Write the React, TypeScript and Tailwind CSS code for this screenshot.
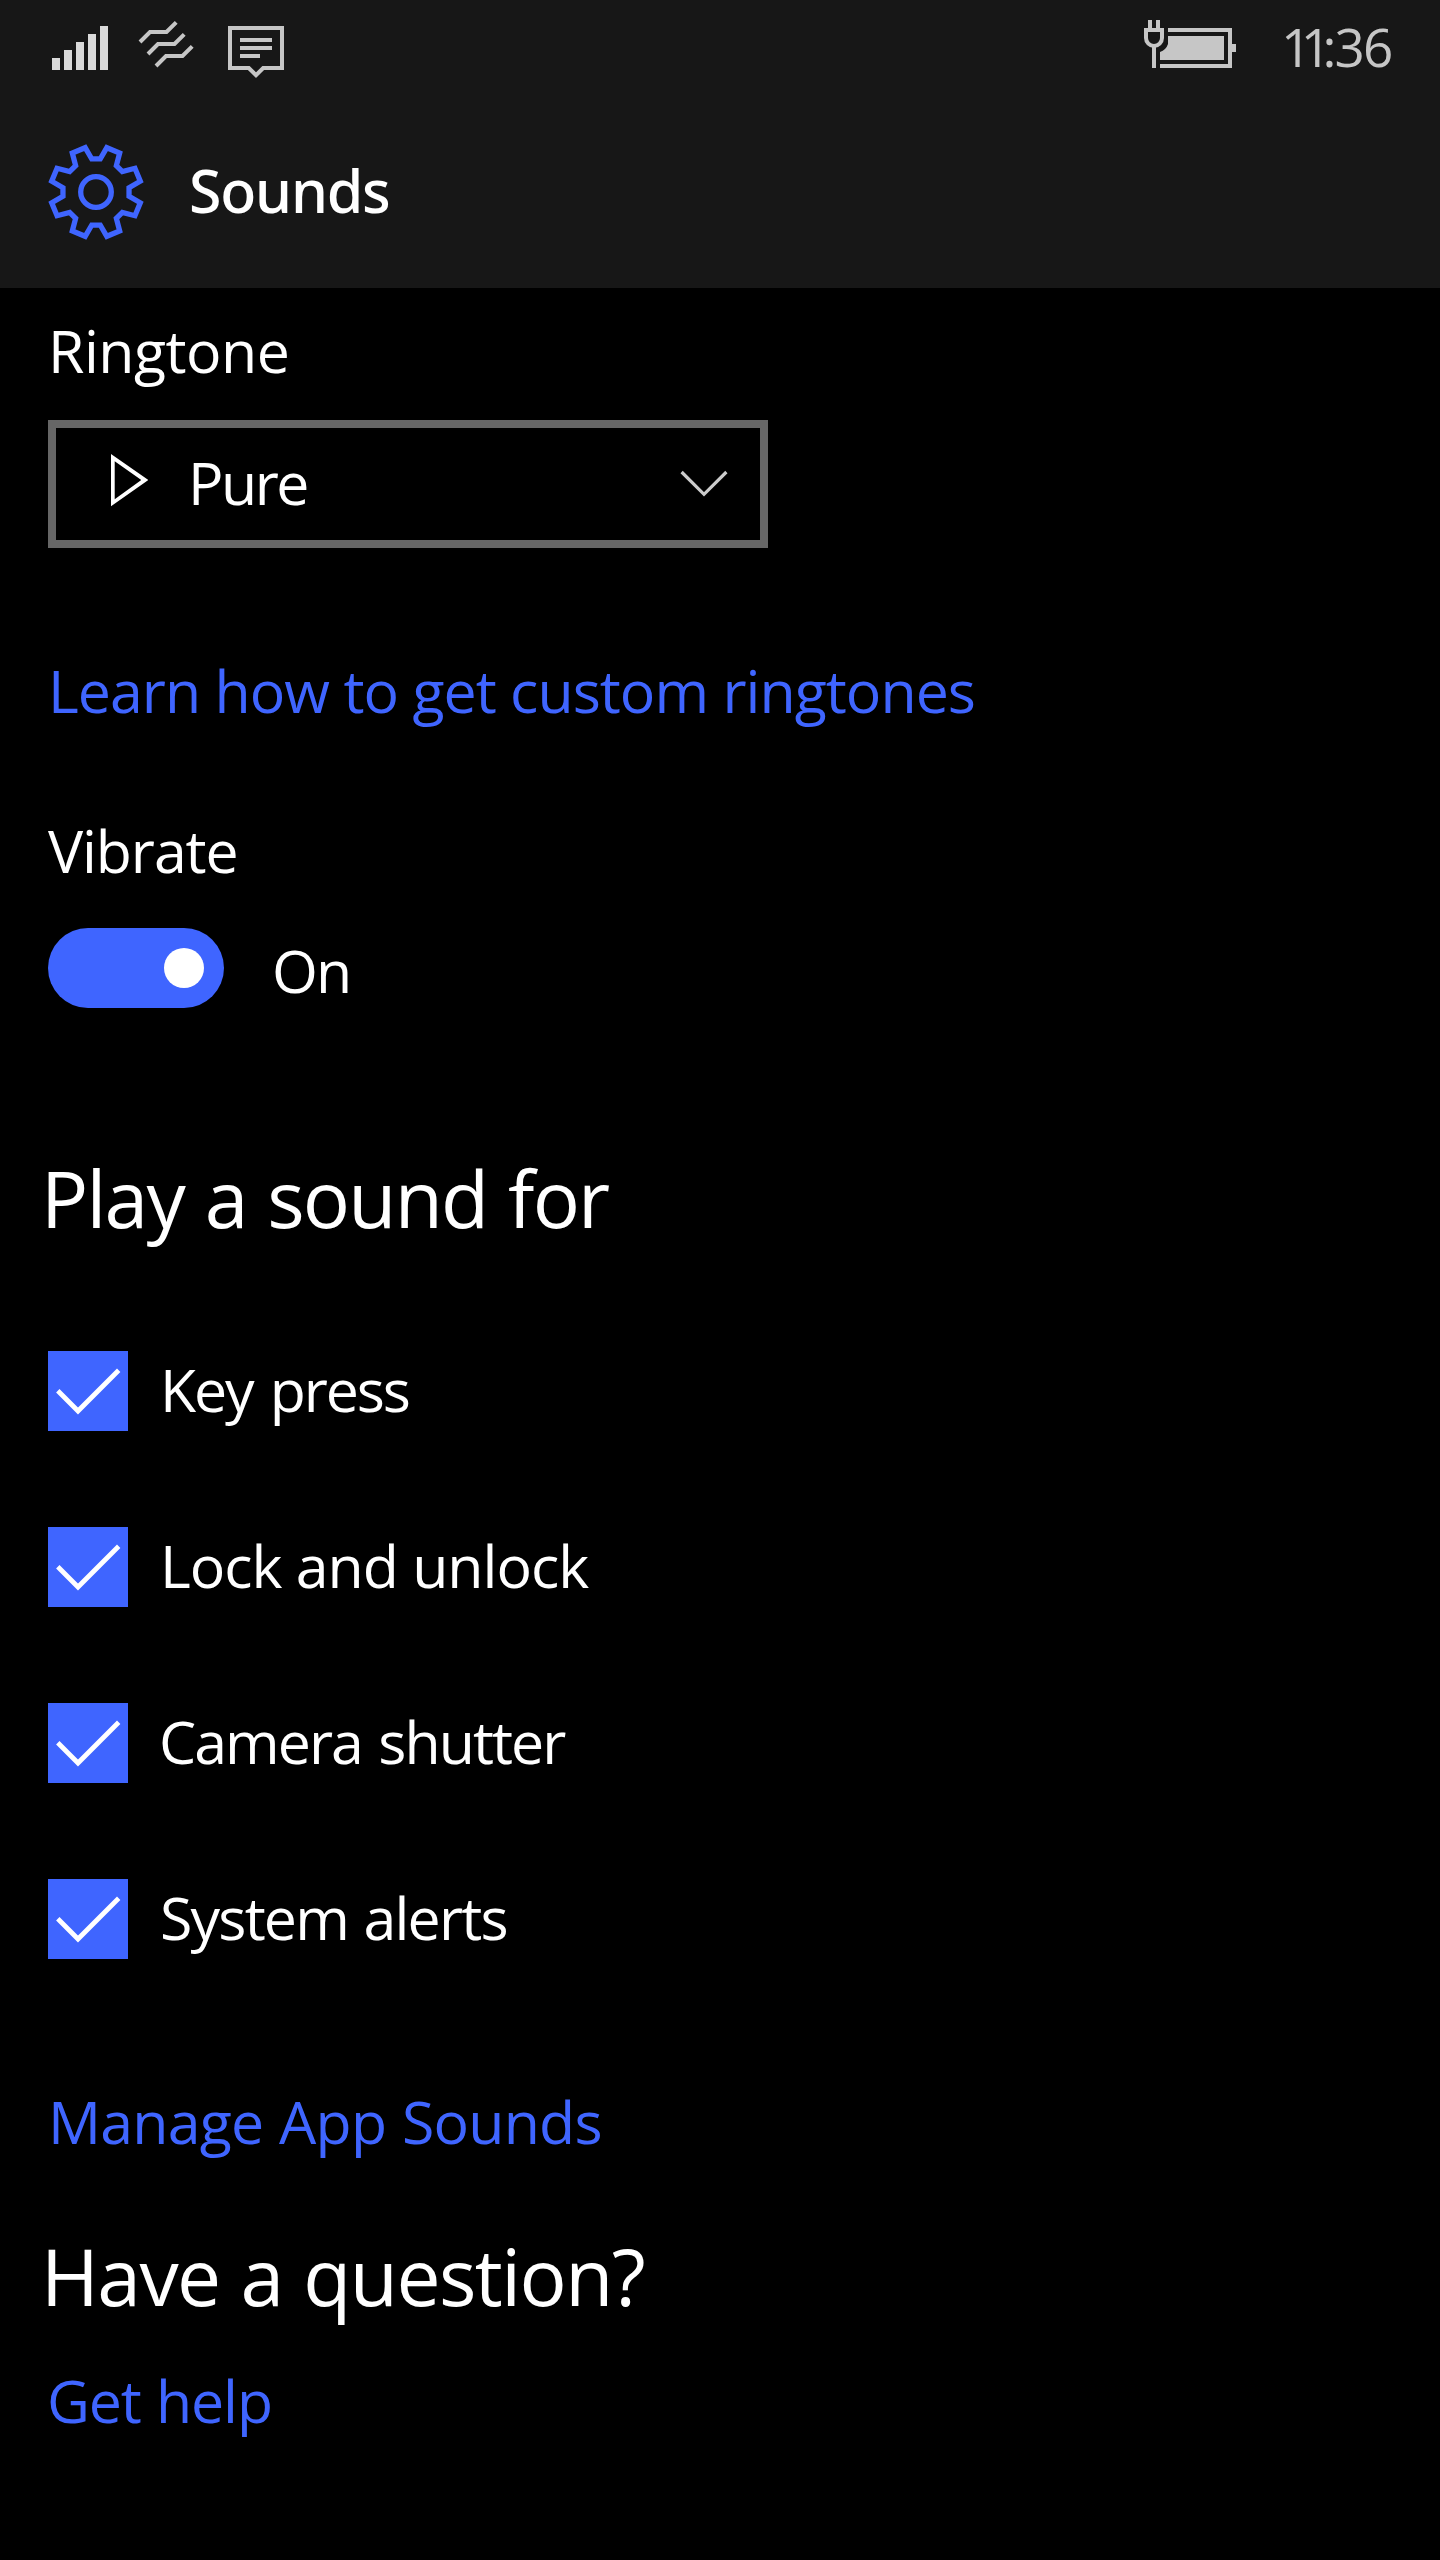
import type { ReactNode } from "react";

function polar(radius: number, degrees: number) {
  const a = (degrees * Math.PI) / 180;
  return `${(48 + radius * Math.sin(a)).toFixed(2)},${(48 - radius * Math.cos(a)).toFixed(2)}`;
}

const gearPoints = [0, 45, 90, 135, 180, 225, 270, 315]
  .map((a) => [polar(33.3, a + 7.3), polar(45.6, a + 13.7), polar(45.6, a + 31.3), polar(33.3, a + 37.7)].join(" "))
  .join(" ");

function SignalIcon() {
  return (
    <svg className="h-24 w-14" viewBox="0 0 56 96" fill="#dadada">
      <path d="M0 58h8v12H0zM12 50h8v20h-8zM24 42h8v28h-8zM36 34h8v36h-8zM48 26h8v44h-8z" />
    </svg>
  );
}

function VibrateIcon() {
  return (
    <svg className="ml-[30px] h-24 w-14" viewBox="138 0 56 96" fill="none" stroke="#c6c6c6" strokeWidth="4">
      <path d="M140 42l10-10h16.500l9.700-9.700M148 54l10-10h16.500l9.700-9.700M156 66l10-10h16.500l9.700-9.700" />
    </svg>
  );
}

function MessageIcon() {
  return (
    <svg className="ml-[34px] h-24 w-14" viewBox="228 0 56 96" fill="none" stroke="#c6c6c6" strokeWidth="4">
      <path d="M230 28h52v40h-18.800l-7.200 7.200-7.200-7.200H230z" />
      <path d="M240 40h32M240 48h32M240 56h20" />
    </svg>
  );
}

function BatteryIcon() {
  return (
    <svg className="ml-auto h-24 w-[92px]" viewBox="1144 0 92 96" fill="#c6c6c6">
      <path d="M1148 20h4v8h-4zM1156 20h4v8h-4zM1152 46h4v22h-4z" />
      <path d="M1146 30h16v8a8 8 0 0 1-16 0z" fill="none" stroke="#c6c6c6" strokeWidth="4" />
      <path d="M1168 28h64v16h4v8h-4v16h-72v-4h68V32h-60z" />
      <path d="M1168 36h56v24h-64v-8Q1166 50 1168 44z" />
    </svg>
  );
}

function GearIcon() {
  return (
    <svg className="size-24" viewBox="0 0 96 96" fill="none" stroke="#3f65ff" strokeWidth="5.3">
      <polygon points={gearPoints} />
      <circle cx="48" cy="48" r="15.3" />
    </svg>
  );
}

function Label({ className, children }: { className: string; children: ReactNode }) {
  return <div className={`h-20 text-[59px] leading-[80px] whitespace-nowrap ${className}`}>{children}</div>;
}

function Heading({ className, children }: { className: string; children: ReactNode }) {
  return (
    <h2 className={`-ml-[7px] h-[106px] text-[78.5px] leading-[107px] whitespace-nowrap ${className}`}>{children}</h2>
  );
}

const sounds = [
  { name: "Key press", style: "ml-8 tracking-[-2.1px] [word-spacing:4px]" },
  { name: "Lock and unlock", style: "ml-8 tracking-[-1.01px]" },
  { name: "Camera shutter", style: "ml-[31px] tracking-[-1.95px] [word-spacing:3px]" },
  { name: "System alerts", style: "ml-8 tracking-[-1.8px] [word-spacing:2px]" },
];

export default function App() {
  return (
    <div className="flex h-[2560px] w-[1440px] flex-col overflow-hidden bg-black font-['Open_Sans','Noto_Sans',sans-serif] text-white">
      <header className="h-72 shrink-0 bg-[#171717]">
        <div className="flex h-24 pl-[52px]">
          <SignalIcon />
          <VibrateIcon />
          <MessageIcon />
          <BatteryIcon />
          <div className="mt-[11px] ml-[45px] h-[72px] w-[159px] text-[53px] leading-[72px] whitespace-nowrap text-[#c6c6c6]">
            <span className="tracking-[-10.6px]">1</span>
            <span className="tracking-[-8.5px]">1</span>
            <span className="tracking-[-2px]">:</span>
            <span className="tracking-[-1.8px]">3</span>
            <span>6</span>
          </div>
        </div>
        <div className="flex pt-[48px] pl-12">
          <GearIcon />
          <h1 className="mt-[6px] ml-[45px] h-20 font-['Noto_Sans','Open_Sans',sans-serif] text-[59px] leading-[81px] font-medium tracking-[-1.2px]">
            Sounds
          </h1>
        </div>
      </header>

      <main className="flex flex-col items-start pl-12">
        <Label className="mt-[22px] tracking-[-0.5px]">Ringtone</Label>
        <button className="mt-[30px] flex h-32 w-[720px] items-start border-8 border-[#666] text-left">
          <svg className="mt-[24px] ml-[55px] h-[56px] w-[37px]" viewBox="111 452 37 56" fill="#fff">
            <path fillRule="evenodd" d="M111 454L148.300 480 111 506.200zM114.700 461.300V499.200L141.300 480z" />
          </svg>
          <Label className="mt-[14px] ml-10 tracking-[-2.5px]">Pure</Label>
          <svg className="mt-[40px] mr-[32px] ml-auto h-8 w-12" viewBox="680 468 48 32" fill="none" stroke="#ccc" strokeWidth="3.2">
            <path d="M681.600 472l22.400 22.300 22.400-22.300" />
          </svg>
        </button>
        <Label className="mt-[102px] tracking-[-0.96px] text-[#3f65ff]">Learn how to get custom ringtones</Label>

        <Label className="mt-20 tracking-[-1.1px]">Vibrate</Label>
        <div className="mt-[38px] flex">
          <div className="flex h-20 w-44 items-center justify-end rounded-full bg-[#3f65ff] pr-5">
            <div className="size-10 rounded-full bg-white" />
          </div>
          <Label className="mt-0.5 ml-12 tracking-[-1.9px]">On</Label>
        </div>

        <Heading className="mt-[134px] tracking-[-1.75px] [word-spacing:2px]">Play a sound for</Heading>
        <div className="mt-[99px] flex flex-col gap-[94px]">
          {sounds.map((s) => (
            <div key={s.name} className="flex h-[82px]">
              <svg className="mt-0.5 size-20 bg-[#3f65ff]" viewBox="0 0 80 80" fill="none" stroke="#fff" strokeWidth="4.800">
                <path d="M9.800 39.800l20.200 20.200 40.700-40.700" />
              </svg>
              <Label className={s.style}>{s.name}</Label>
            </div>
          ))}
        </div>

        <Label className="mt-[122px] tracking-[-0.75px] text-[#3f65ff] [word-spacing:1px]">Manage App Sounds</Label>
        <Heading className="mt-[61px] tracking-[-1.55px] [word-spacing:2px]">Have a question?</Heading>
        <Label className="mt-[32px] -ml-px tracking-[-1.1px] text-[#3f65ff] [word-spacing:1px]">Get help</Label>
      </main>
    </div>
  );
}
